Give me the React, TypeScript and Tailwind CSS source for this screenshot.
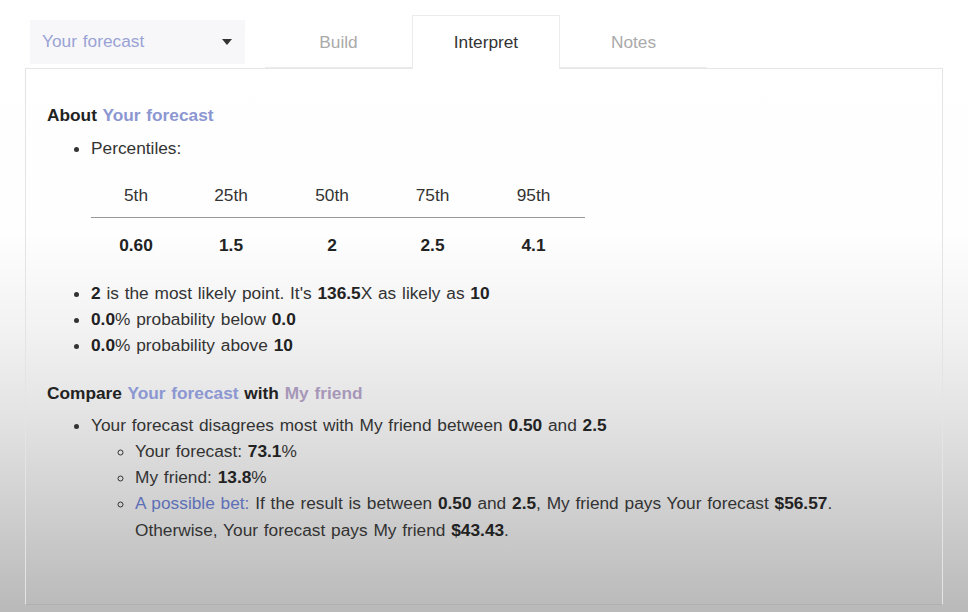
const font = { fontFamily: '"Liberation Sans", Arial, sans-serif' };

function Tab({ label, active }: { label: string; active?: boolean }) {
  return (
    <div
      className={
        active
          ? "w-[148px] h-[54px] flex items-center justify-center pt-[1px] border-x border-t border-[#ececec] bg-white text-[#333] -mb-px"
          : "w-[147px] h-[53px] flex items-center justify-center pt-[3px] text-[#aaa] border-b border-[#ececec]"
      }
    >
      {label}
    </div>
  );
}

const cols = [
  { w: "w-[90px]", h: "5th", v: "0.60" },
  { w: "w-[100px]", h: "25th", v: "1.5" },
  { w: "w-[102px]", h: "50th", v: "2" },
  { w: "w-[99px]", h: "75th", v: "2.5" },
  { w: "w-[103px]", h: "95th", v: "4.1" },
];

export default function App() {
  return (
    <div
      style={font}
      className="w-[968px] h-[612px] overflow-hidden text-[17.3px] [word-spacing:1px] text-[#333] bg-[linear-gradient(to_bottom,#ffffff_0%,#fefefe_38%,#f2f2f2_54%,#e2e2e2_69%,#cdcdcd_85%,#b9b9b9_100%)]"
    >
      <div className="pt-[15px] pl-[30px] flex items-end">
        <div className="w-[215px] h-[44px] mb-[4px] bg-[#f7f7f9] flex items-center justify-between pl-[12px] pr-[13px] text-[#9aa3d5]">
          <span>Your forecast</span>
          <svg width="10" height="6" viewBox="0 0 10 6">
            <path d="M0 0h10L5 6z" fill="#333" />
          </svg>
        </div>
        <div className="w-[20px] h-[53px]" />
        <Tab label="Build" />
        <Tab label="Interpret" active />
        <Tab label="Notes" />
      </div>

      <div className="ml-[25px] w-[918px] h-[537px] border-x border-b border-t border-[#e6e6e6] border-b-[#b0b0b0] border-x-[#e4e4e4] pl-[21px] pt-[33px] leading-[26px]">
        <div className="font-bold text-[#222]">
          About <span className="text-[#8c97d2]">Your forecast</span>
        </div>

        <ul className="list-disc pl-[44px] mt-[7px]">
          <li>Percentiles:</li>
        </ul>

        <div className="ml-[44px] mt-[11px] w-[494px]">
          <div className="flex h-[46px] border-b border-[#999] items-center pt-[1px]">
            {cols.map((c) => (
              <div key={c.h} className={`${c.w} text-center`}>
                {c.h}
              </div>
            ))}
          </div>
          <div className="flex h-[52px] items-center font-bold text-[#222] pt-[1px]">
            {cols.map((c) => (
              <div key={c.h} className={`${c.w} text-center`}>
                {c.v}
              </div>
            ))}
          </div>
        </div>

        <ul className="list-disc pl-[44px] mt-[10px]">
          <li>
            <b className="text-[#222]">2</b> is the most likely point. It's <b className="text-[#222]">136.5</b>X as likely as{" "}
            <b className="text-[#222]">10</b>
          </li>
          <li>
            <b className="text-[#222]">0.0</b>% probability below <b className="text-[#222]">0.0</b>
          </li>
          <li>
            <b className="text-[#222]">0.0</b>% probability above <b className="text-[#222]">10</b>
          </li>
        </ul>

        <div className="font-bold text-[#222] mt-[22px]">
          Compare <span className="text-[#8c97d2]">Your forecast</span> with{" "}
          <span className="text-[#a697b8]">My friend</span>
        </div>

        <ul className="list-disc pl-[44px] mt-[6px]">
          <li>
            Your forecast disagrees most with My friend between <b className="text-[#222]">0.50</b> and{" "}
            <b className="text-[#222]">2.5</b>
            <ul className="list-[circle] pl-[44px]">
              <li>
                Your forecast: <b className="text-[#222]">73.1</b>%
              </li>
              <li>
                My friend: <b className="text-[#222]">13.8</b>%
              </li>
              <li className="leading-[27px]">
                <span className="text-[#5d6fb6]">A possible bet:</span> If the result is between{" "}
                <b className="text-[#222]">0.50</b> and <b className="text-[#222]">2.5</b>, My friend pays Your forecast{" "}
                <b className="text-[#222]">$56.57</b>.
                <br />
                Otherwise, Your forecast pays My friend <b className="text-[#222]">$43.43</b>.
              </li>
            </ul>
          </li>
        </ul>
      </div>
    </div>
  );
}
